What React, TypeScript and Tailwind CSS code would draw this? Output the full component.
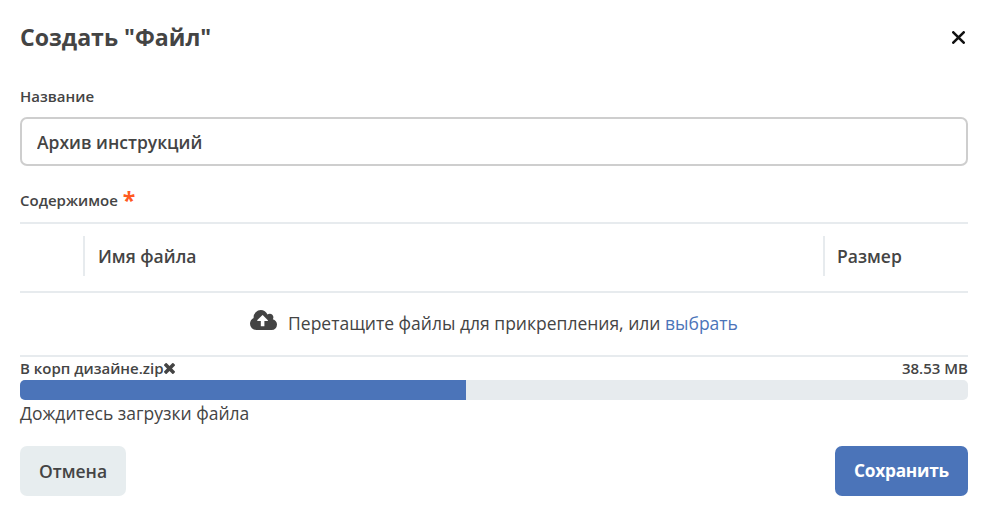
import React from "react";

function CloseIcon() {
  return (
    <svg width="13" height="13" viewBox="0 0 13 13" fill="none" stroke="currentColor" strokeWidth="2.6" strokeLinecap="round">
      <path d="M1.3 1.3 11.7 11.7M11.7 1.3 1.3 11.7" />
    </svg>
  );
}

function RemoveIcon() {
  return (
    <svg width="11" height="11" viewBox="302 366 1188 1188" fill="currentColor">
      <path d="M1490 1322q0 40-28 68l-136 136q-28 28-68 28t-68-28l-294-294-294 294q-28 28-68 28t-68-28l-136-136q-28-28-28-68t28-68l294-294-294-294q-28-28-28-68t28-68l136-136q28-28 68-28t68 28l294 294 294-294q28-28 68-28t68 28l136 136q28 28 28 68t-28 68l-294 294 294 294q28 28 28 68z" />
    </svg>
  );
}

function UploadIcon() {
  return (
    <svg width="27" height="20" viewBox="0 128 1920 1408" preserveAspectRatio="none" fill="currentColor">
      <path d="M1280 864q0-14-9-23l-352-352q-9-9-23-9t-23 9l-351 351q-10 12-10 24 0 14 9 23t23 9h224v352q0 13 9.5 22.5t22.5 9.5h192q13 0 22.5-9.5t9.5-22.5v-352h224q13 0 22.5-9.5t9.5-22.5zm640 288q0 159-112.5 271.5t-271.5 112.5h-1088q-185 0-316.5-131.5t-131.5-316.5q0-130 70-240t188-165q-2-30-2-43 0-212 150-362t362-150q156 0 285.5 87t188.5 231q71-62 166-62 106 0 181 75t75 181q0 76-41 138 130 31 213.5 135.5t83.5 238.5z" />
    </svg>
  );
}

export default function App() {
  return (
    <main className="flex h-[513px] w-[984px] flex-col bg-white pr-4 pl-5 font-['Open_Sans','Noto_Sans',sans-serif] text-[17.5px] leading-6 text-[#444444]">
      <header className="flex h-[75px] items-center justify-between">
        <h1 className="pb-[2px] text-[23.1px] leading-8 font-bold">Создать "Файл"</h1>
        <button aria-label="Закрыть" className="mr-[3px] text-[#111111]">
          <CloseIcon />
        </button>
      </header>
      <label className="mt-[10px] flex h-[21px] items-center text-[15px] font-semibold">Название</label>
      <input
        className="mt-[11px] h-[49px] w-full shrink-0 rounded-[7px] border-2 border-[#cecece] px-[15px] font-semibold outline-none"
        defaultValue="Архив инструкций"
      />
      <div className="mt-[23px] flex h-[21px] items-center gap-[5px] text-[15px] font-semibold">
        <span>Содержимое</span>
        <span className="text-[23px] font-bold text-[#ff5a1f]">*</span>
      </div>
      <section className="mt-[12px] border-y-2 border-[#e7ebee]">
        <div className="flex h-[67px] items-start pt-3 font-semibold">
          <div className="w-[63px]" />
          <div className="flex h-10 w-[740px] items-center border-l-2 border-[#e7ebee] pl-[13px]">Имя файла</div>
          <div className="flex h-10 items-center border-l-2 border-[#e7ebee] pl-3">Размер</div>
        </div>
        <div className="flex h-[64px] items-start justify-center border-t-2 border-[#e7ebee] pt-[17px]">
          <span className="mr-[11px]"><UploadIcon /></span>
          <span className="mt-px">Перетащите файлы для прикрепления, или <a className="text-[#4b74b9]">выбрать</a></span>
        </div>
      </section>
      <div className="flex h-[23px] items-start justify-between text-[15px] leading-[22px] font-semibold">
        <span className="flex items-center">В корп дизайне.zip<RemoveIcon /></span>
        <span>38.53 MB</span>
      </div>
      <div className="h-5 shrink-0 overflow-hidden rounded-[5px] bg-[#e7ebee]">
        <div className="h-full w-[446px] bg-[#4b74b9]" />
      </div>
      <p className="mt-px">Дождитесь загрузки файла</p>
      <footer className="mt-[21px] flex justify-between font-semibold">
        <button className="h-[50px] w-[106px] rounded-[7px] bg-[#e7edef]">Отмена</button>
        <button className="h-[50px] w-[133px] rounded-[7px] bg-[#4b74b9] text-[17.3px] font-bold tracking-[-0.25px] text-white">Сохранить</button>
      </footer>
    </main>
  );
}
